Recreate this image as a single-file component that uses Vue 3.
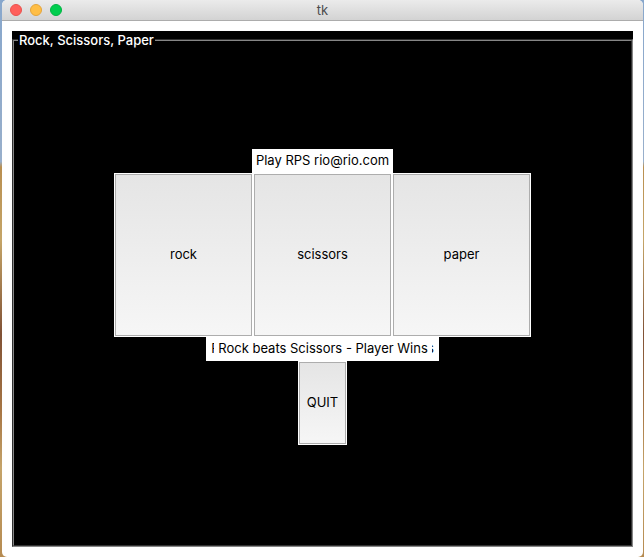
<script setup>
const choices = ['rock', 'scissors', 'paper']
</script>

<template>
  <div class="desktop">
    <main class="window">
      <header class="titlebar">
        <div class="lights">
          <button class="light close" aria-label="Close"></button>
          <button class="light minimize" aria-label="Minimize"></button>
          <button class="light zoom" aria-label="Zoom"></button>
        </div>
        <h1 class="title">tk</h1>
      </header>
      <div class="content">
        <div class="panel">
          <fieldset class="group">
            <legend>Rock, Scissors, Paper</legend>
            <div class="game">
              <p class="label prompt">Play RPS rio@rio.com</p>
              <div class="choices">
                <button v-for="choice in choices" :key="choice" class="tk-button choice">
                  <span class="face">{{ choice }}</span>
                </button>
              </div>
              <p class="label result">
                <span class="sliver" aria-hidden="true">R</span>
                <span class="message">Rock beats Scissors - Player Wins</span>
                <span class="sliver end" aria-hidden="true">s</span>
              </p>
              <button class="tk-button quit"><span class="face">QUIT</span></button>
            </div>
          </fieldset>
        </div>
      </div>
    </main>
  </div>
</template>

<style>
body {
  margin: 0;
}
</style>

<style scoped>
* {
  box-sizing: border-box;
}

.desktop {
  display: flex;
  min-height: 100vh;
  padding: 0 1px 0 2px;
  background: linear-gradient(#88a7cc 0, #98afcb 29%, #b98f50 30%, #c5a568 43%, #805236 60%, #a87745 74%, #c5a46a 84%, #b68b51 100%);
  font-family: Inter, "Liberation Sans", sans-serif;
  font-size: 13px;
  line-height: 18px;
}

.window {
  display: flex;
  flex: 1;
  flex-direction: column;
  overflow: hidden;
  border-radius: 5px;
  background: #fff;
}

.titlebar {
  display: grid;
  grid-template-columns: 1fr auto 1fr;
  align-items: center;
  height: 21px;
  padding: 0 8px;
  border-bottom: 1px solid #acacac;
  background: linear-gradient(#ebebeb, #d3d3d3);
}

.lights {
  display: flex;
  gap: 8px;
}

.light {
  width: 12px;
  height: 12px;
  padding: 0;
  border: 1px solid;
  border-radius: 50%;
}

.close {
  border-color: #e9514d;
  background: #ff5f5b;
}

.minimize {
  border-color: #e3a43b;
  background: #ffbe45;
}

.zoom {
  border-color: #00b342;
  background: #00ce4e;
}

.title {
  margin: 0;
  color: #4c4c4c;
  font-size: 13px;
  font-weight: 400;
}

.content {
  display: flex;
  flex: 1;
  padding: 10px;
}

.panel {
  display: flex;
  flex: 1;
  background: #000;
}

.group {
  flex: 1;
  min-width: 0;
  margin: 0;
  padding: 0 4px;
  border: 2px groove #868686;
}

legend {
  padding: 0 1px;
  color: #fff;
  font-weight: 500;
}

.game {
  display: flex;
  flex-direction: column;
  align-items: center;
  justify-content: center;
  height: 100%;
}

.label {
  display: flex;
  align-items: center;
  height: 24px;
  margin: 0;
  padding: 0 4px 2px;
  background: #fff;
  color: #000;
  white-space: nowrap;
}

.choices {
  display: flex;
}

.tk-button {
  display: flex;
  padding: 1px;
  border: 0;
  background: #fff;
  color: #000;
  font: inherit;
}

.face {
  display: flex;
  flex: 1;
  align-items: center;
  justify-content: center;
  padding-bottom: 2px;
  border: 1px solid #adadad;
  background: linear-gradient(#e5e5e5, #f6f6f6);
}

.choice {
  width: 139px;
  height: 164px;
}

.result {
  padding: 0 5px 2px;
}

.message {
  padding: 0 4px;
}

.sliver {
  display: flex;
  width: 3px;
  overflow: hidden;
}

.end {
  justify-content: flex-end;
  width: 2px;
}

.quit {
  width: 49px;
  height: 84px;
}
</style>
